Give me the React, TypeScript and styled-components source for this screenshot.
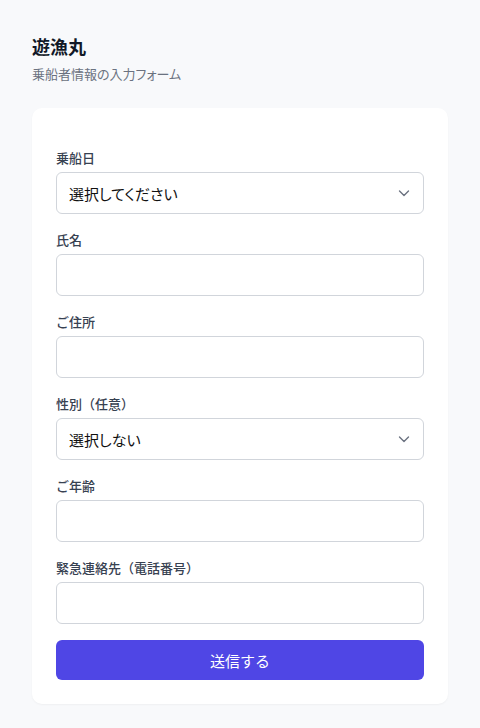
import React from "react";
import styled, { createGlobalStyle } from "styled-components";

const GlobalStyle = createGlobalStyle`
  html, body {
    margin: 0;
    background: #f8f9fb;
    font-family: "Noto Sans CJK JP", "Noto Sans", sans-serif;
  }
  * { box-sizing: border-box; }
`;

const Page = styled.div`
  padding: 32px 32px 24px;
`;

const Title = styled.h1`
  margin: 0;
  font-size: 18px;
  line-height: 28px;
  font-weight: 700;
  color: #111827;
`;

const Subtitle = styled.p`
  margin: 4px 0 0;
  font-size: 13px;
  line-height: 20px;
  color: #6b7280;
  font-feature-settings: "palt";
`;

const Card = styled.form`
  margin-top: 24px;
  background: #fff;
  border-radius: 10px;
  box-shadow: 0 1px 2px rgba(0, 0, 0, 0.04);
  padding: 40px 24px 24px;
  display: flex;
  flex-direction: column;
  gap: 16px;
`;

const Field = styled.div`
  display: flex;
  flex-direction: column;
  gap: 4px;
`;

const Label = styled.label`
  font-size: 13px;
  line-height: 20px;
  font-weight: 500;
  color: #374151;
`;

const Input = styled.input`
  height: 42px;
  width: 100%;
  border: 1px solid #d1d5db;
  border-radius: 6px;
  background: #fff;
  padding: 0 12px;
  font-family: inherit;
  font-size: 15px;
  color: #111827;
  outline: none;
`;

const SelectWrap = styled.div`
  position: relative;
  height: 42px;
`;

const Select = styled.select`
  appearance: none;
  height: 42px;
  width: 100%;
  border: 1px solid #d1d5db;
  border-radius: 6px;
  background: #fff;
  padding: 0 12px;
  font-family: inherit;
  font-size: 15px;
  font-feature-settings: "palt";
  color: #111111;
  outline: none;
`;

const Chevron = styled.svg`
  position: absolute;
  right: 14px;
  top: 15px;
  pointer-events: none;
`;

const Submit = styled.button`
  height: 40px;
  width: 100%;
  border: none;
  border-radius: 6px;
  background: #4f46e5;
  color: #fff;
  font-family: inherit;
  font-size: 15px;
  cursor: pointer;
`;

const ChoiceField = ({ label, placeholder }: { label: string; placeholder: string }) => (
  <Field>
    <Label>{label}</Label>
    <SelectWrap>
      <Select defaultValue="">
        <option value="">{placeholder}</option>
      </Select>
      <Chevron width="12" height="12" viewBox="0 0 12 12" fill="none">
        <path d="M1.5 4 L6 8.5 L10.5 4" stroke="#6b7280" strokeWidth="1.4" strokeLinecap="round" strokeLinejoin="round" />
      </Chevron>
    </SelectWrap>
  </Field>
);

const TextField = ({ label, type = "text" }: { label: string; type?: string }) => (
  <Field>
    <Label>{label}</Label>
    <Input type={type} />
  </Field>
);

export default function App() {
  return (
    <Page>
      <GlobalStyle />
      <Title>遊漁丸</Title>
      <Subtitle>乗船者情報の入力フォーム</Subtitle>
      <Card onSubmit={(e) => e.preventDefault()}>
        <ChoiceField label="乗船日" placeholder="選択してください" />
        <TextField label="氏名" />
        <TextField label="ご住所" />
        <ChoiceField label="性別（任意）" placeholder="選択しない" />
        <TextField label="ご年齢" type="number" />
        <TextField label="緊急連絡先（電話番号）" type="tel" />
        <Submit type="submit">送信する</Submit>
      </Card>
    </Page>
  );
}
